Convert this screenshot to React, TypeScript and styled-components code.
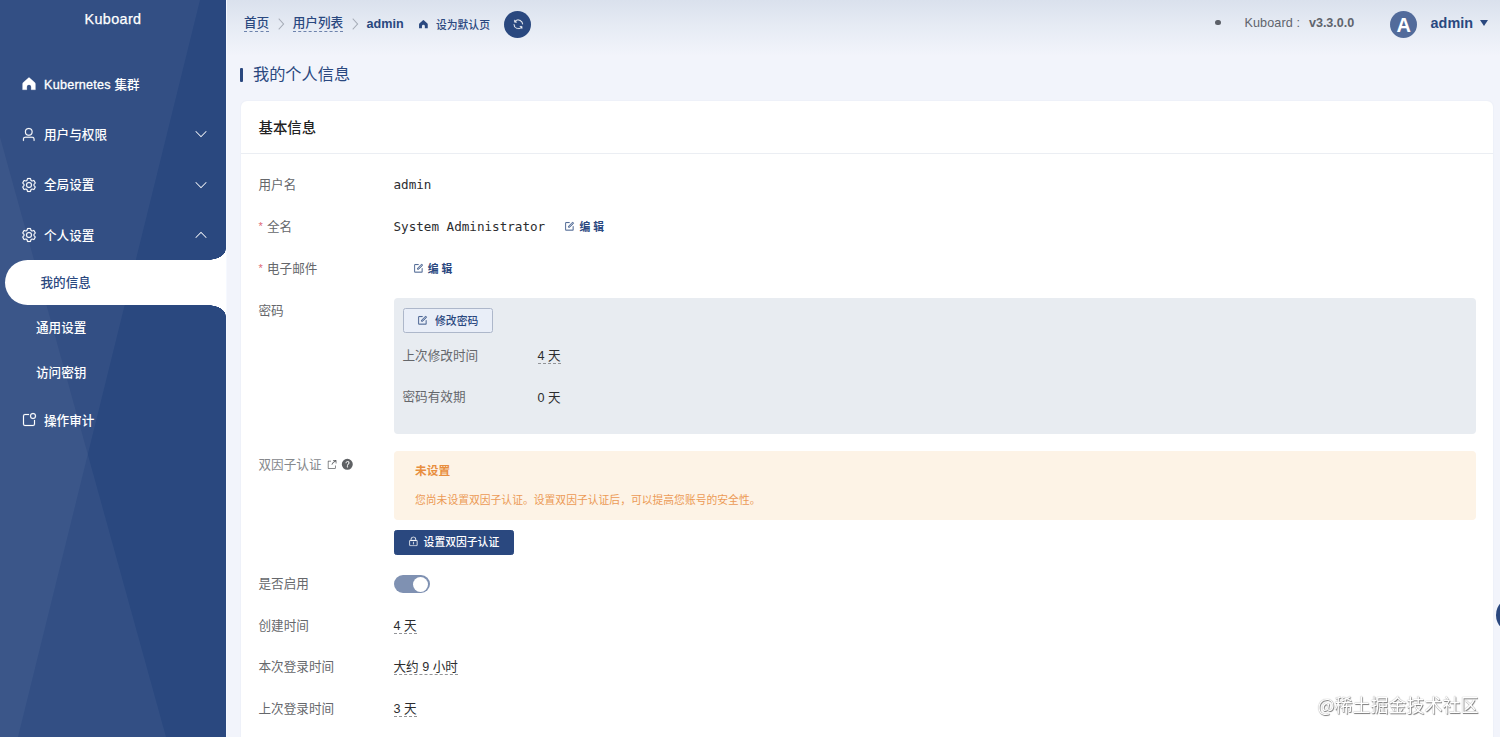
import React from "react";
import styled, { createGlobalStyle, css } from "styled-components";

const navy = "#2a487f";

const GlobalStyle = createGlobalStyle`
  * { box-sizing: border-box; }
  html, body, #root { height: 100%; }
  body {
    margin: 0;
    overflow: hidden;
    background: #f2f4fb;
    color: #303133;
    font-family: "Liberation Sans", "Noto Sans CJK SC", sans-serif;
    font-size: 12.6px;
  }
`;

const paths = {
  home: ["M512 100 C540 100 560 125 580 145 L870 400 Q925 450 925 515 V885 H650 V690 A138 138 0 0 0 374 690 V885 H99 V515 Q99 450 154 400 L444 145 C464 125 484 100 512 100z"],
  user: ["M512 512a192 192 0 1 0 0-384 192 192 0 0 0 0 384zm0 64a256 256 0 1 1 0-512 256 256 0 0 1 0 512zm320 320v-96a96 96 0 0 0-96-96H288a96 96 0 0 0-96 96v96a32 32 0 1 1-64 0v-96a160 160 0 0 1 160-160h448a160 160 0 0 1 160 160v96a32 32 0 1 1-64 0z"],
  setting: ["M600.704 64a32 32 0 0 1 30.464 22.208l35.2 109.376c14.784 7.232 28.928 15.36 42.432 24.512l112.384-24.192a32 32 0 0 1 34.432 15.36L944.32 364.8a32 32 0 0 1-4.032 37.504l-77.12 85.12a357.12 357.12 0 0 1 0 49.024l77.12 85.248a32 32 0 0 1 4.032 37.504l-88.704 153.6a32 32 0 0 1-34.432 15.296L708.8 803.904c-13.44 9.088-27.648 17.28-42.368 24.512l-35.264 109.376A32 32 0 0 1 600.704 960H423.296a32 32 0 0 1-30.464-22.208L357.696 828.48a351.616 351.616 0 0 1-42.56-24.64l-112.32 24.256a32 32 0 0 1-34.432-15.36L79.68 659.2a32 32 0 0 1 4.032-37.504l77.12-85.248a357.12 357.12 0 0 1 0-48.896l-77.12-85.248A32 32 0 0 1 79.68 364.8l88.704-153.6a32 32 0 0 1 34.432-15.296l112.32 24.256c13.568-9.152 27.776-17.408 42.56-24.64l35.2-109.312A32 32 0 0 1 423.232 64H600.64zm-23.424 64H446.72l-36.352 113.088-24.512 11.968a294.113 294.113 0 0 0-34.816 20.096l-22.656 15.36-116.224-25.088-65.28 113.152 79.68 88.192-1.92 27.136a293.12 293.12 0 0 0 0 40.192l1.92 27.136-79.808 88.192 65.344 113.152 116.224-25.024 22.656 15.296a294.113 294.113 0 0 0 34.816 20.096l24.512 11.968L446.72 896h130.688l36.48-113.152 24.448-11.904a288.282 288.282 0 0 0 34.752-20.096l22.592-15.296 116.288 25.024 65.28-113.152-79.744-88.192 1.92-27.136a293.12 293.12 0 0 0 0-40.256l-1.92-27.136 79.808-88.128-65.344-113.152-116.288 24.96-22.592-15.232a287.616 287.616 0 0 0-34.752-20.096l-24.448-11.904L577.344 128zM512 320a192 192 0 1 1 0 384 192 192 0 0 1 0-384zm0 64a128 128 0 1 0 0 256 128 128 0 0 0 0-256z"],
  audit: [
    "M512 128v64H256a64 64 0 0 0-64 64v512a64 64 0 0 0 64 64h512a64 64 0 0 0 64-64V512h64v256a128 128 0 0 1-128 128H256a128 128 0 0 1-128-128V256a128 128 0 0 1 128-128h256z",
    "M768 384a128 128 0 1 0 0-256 128 128 0 0 0 0 256zm0 64a192 192 0 1 1 0-384 192 192 0 0 1 0 384z",
  ],
  edit: [
    "M832 512a32 32 0 1 1 64 0v352a32 32 0 0 1-32 32H160a32 32 0 0 1-32-32V160a32 32 0 0 1 32-32h352a32 32 0 0 1 0 64H192v640h640V512z",
    "m469.952 554.24 52.8-7.552L847.104 222.4a32 32 0 1 0-45.248-45.248L477.44 501.44l-7.552 52.8zm422.4-422.4a96 96 0 0 1 0 135.808l-331.84 331.84a32 32 0 0 1-18.112 9.088L436.8 623.68a32 32 0 0 1-36.224-36.224l15.104-105.6a32 32 0 0 1 9.024-18.112l331.904-331.84a96 96 0 0 1 135.744 0z",
  ],
  lock: [
    "M224 448a32 32 0 0 0-32 32v384a32 32 0 0 0 32 32h576a32 32 0 0 0 32-32V480a32 32 0 0 0-32-32H224zm0-64h576a96 96 0 0 1 96 96v384a96 96 0 0 1-96 96H224a96 96 0 0 1-96-96V480a96 96 0 0 1 96-96z",
    "M512 544a32 32 0 0 1 32 32v192a32 32 0 1 1-64 0V576a32 32 0 0 1 32-32zm192-160v-64a192 192 0 1 0-384 0v64h384zM512 64a256 256 0 0 1 256 256v128H256V320A256 256 0 0 1 512 64z",
  ],
  refresh: ["M771.776 794.88A384 384 0 0 1 128 512h64a320 320 0 0 0 555.712 216.448H654.72a32 32 0 1 1 0-64h149.056a32 32 0 0 1 32 32v148.928a32 32 0 1 1-64 0v-50.56zM276.288 295.616h92.992a32 32 0 0 1 0 64H220.16a32 32 0 0 1-32-32V178.56a32 32 0 0 1 64 0v50.56A384 384 0 0 1 896.128 512h-64a320 320 0 0 0-555.776-216.384z"],
  question: ["M512 64a448 448 0 1 1 0 896 448 448 0 0 1 0-896zm23.744 191.488c-52.096 0-92.928 14.784-123.2 44.352-30.976 29.568-45.76 70.4-45.76 122.496h80.256c0-29.568 5.632-52.8 17.6-68.992 13.376-19.712 35.2-28.864 66.176-28.864 23.936 0 42.944 6.336 56.32 19.712 12.672 13.376 19.712 31.68 19.712 54.912 0 17.6-6.336 34.496-19.008 49.984l-8.448 9.856c-45.76 40.832-73.216 70.4-82.368 89.408-9.856 19.008-14.08 42.24-14.08 68.992v9.856h80.96v-9.856c0-16.896 3.52-31.68 10.56-45.76 6.336-12.672 15.488-24.64 28.16-35.2 33.792-29.568 54.208-48.576 60.544-55.616 16.896-22.528 26.048-51.392 26.048-86.592 0-42.944-14.08-76.736-42.24-101.376-28.16-25.344-65.472-37.312-111.232-37.312zm-12.672 406.208a54.272 54.272 0 0 0-38.72 14.784 49.408 49.408 0 0 0-15.488 38.016c0 15.488 4.928 28.16 15.488 38.016A54.848 54.848 0 0 0 523.072 768c15.488 0 28.16-4.928 38.72-14.784a51.52 51.52 0 0 0 16.192-38.72 51.968 51.968 0 0 0-15.488-38.016 55.936 55.936 0 0 0-39.424-14.784z"],
  external: ["M448 160v64H224v576h576V576h64v256a32 32 0 0 1-32 32H192a32 32 0 0 1-32-32V192a32 32 0 0 1 32-32z M620 96H900a30 30 0 0 1 30 30V400H862V214Q640 300 545 520L482 492Q580 260 800 164H620z"],
  down: ["M100 330 L145 285 L512 652 L879 285 L924 330 L512 742z"],
  up: ["M100 694 L145 739 L512 372 L879 739 L924 694 L512 282z"],
  right: ["M300 90 L350 40 L780 512 L350 984 L300 934 L685 512z"],
};

type IconName = keyof typeof paths;

const Svg = styled.svg<{ $size: number; $bold?: boolean }>`
  display: block;
  flex: none;
  width: ${(p) => p.$size}px;
  height: ${(p) => p.$size}px;
  fill: currentColor;
  stroke: currentColor;
  stroke-width: ${(p) => (p.$bold ? 12 : 0)};
`;

const Icon = ({ name, size, bold }: { name: IconName; size: number; bold?: boolean }) => (
  <Svg $size={size} $bold={bold} viewBox="0 0 1024 1024" aria-hidden="true">
    {paths[name].map((d) => (
      <path key={d} d={d} />
    ))}
  </Svg>
);

const Shell = styled.div`
  display: flex;
  height: 737px;
  overflow: hidden;
`;

/* ---------- sidebar ---------- */

const Sidebar = styled.aside`
  position: relative;
  flex: none;
  width: 226px;
  background: ${navy};
  color: #fff;
  isolation: isolate;

  &::before,
  &::after {
    content: "";
    position: absolute;
    inset: 0;
    z-index: -1;
    background: rgba(255, 255, 255, 0.045);
  }
  &::before {
    clip-path: polygon(0 0, 200px 0, 18px 737px, 0 737px);
  }
  &::after {
    clip-path: polygon(0 137px, 166px 737px, 0 737px);
  }
`;

const Brand = styled.div`
  height: 59px;
  padding-top: 10px;
  text-align: center;
  font-size: 14.4px;
  line-height: 19px;
  letter-spacing: 0.35px;
  -webkit-text-stroke: 0.25px;
`;

const MenuItem = styled.div`
  display: flex;
  align-items: center;
  height: 50.3px;
  padding: 0 18px 0 21px;
  font-weight: 500;
`;

const MenuIcon = styled.span`
  display: flex;
  justify-content: center;
  width: 15px;
  margin-right: 8px;
`;

const MenuText = styled.span`
  flex: 1;
  padding-bottom: 2px;
`;

const Latin = styled.span`
  letter-spacing: 0.25px;
  -webkit-text-stroke: 0.3px;
`;

const SubItem = styled.div<{ $active?: boolean }>`
  position: relative;
  display: flex;
  align-items: center;
  height: 45px;
  padding: 0 0 2px 36px;
  font-weight: 500;

  ${(p) =>
    p.$active &&
    css`
      margin-left: 4.5px;
      border-radius: 22.5px 0 0 22.5px;
      background: #fff;
      color: ${navy};

      &::before,
      &::after {
        content: "";
        position: absolute;
        right: 0;
        width: 18px;
        height: 11px;
      }
      &::before {
        bottom: 100%;
        background: radial-gradient(ellipse 18px 11px at 0 0, transparent 97%, #fff 100%);
      }
      &::after {
        top: 100%;
        background: radial-gradient(ellipse 18px 11px at 0 100%, transparent 97%, #fff 100%);
      }
    `}
`;

/* ---------- header ---------- */

const Main = styled.main`
  flex: 1;
  min-width: 0;
  background: linear-gradient(#dae1ed 0, #e6ebf4 26px, #f2f4fb 56px);
  background-color: #f2f4fb;
  box-shadow: inset 1px 0 0 #f6f9ff;
`;

const Header = styled.header`
  display: flex;
  align-items: center;
  height: 48px;
  padding: 0 12px 0 18px;
  color: ${navy};
`;

const Crumb = styled.a`
  height: 17px;
  margin-bottom: 1px;
  border-bottom: 1px dashed #6d82ac;
  line-height: 17px;
  font-weight: 500;
`;

const CrumbArrow = styled.span`
  display: flex;
  justify-content: center;
  width: 23.5px;
  margin-bottom: 1px;
  color: #a0a6b2;
`;

const Current = styled.span`
  font-weight: 700;
`;

const SetDefault = styled.span`
  display: flex;
  align-items: center;
  gap: 7.5px;
  margin-left: 14px;
  font-size: 10.8px;
  font-weight: 500;
`;

const SetDefaultText = styled.span`
  padding-bottom: 1px;
`;

const RefreshButton = styled.button`
  display: flex;
  align-items: center;
  justify-content: center;
  width: 27px;
  height: 27px;
  margin-left: 14.5px;
  padding: 0;
  border: 0;
  border-radius: 50%;
  background: ${navy};
  color: #fff;
`;

const HeaderRight = styled.div`
  display: flex;
  align-items: center;
  margin-left: auto;
`;

const Dot = styled.span`
  width: 5.5px;
  height: 5.5px;
  margin: 0 23.5px 3px 0;
  border-radius: 50%;
  background: #5c6068;
`;

const Version = styled.span`
  display: flex;
  gap: 9px;
  margin: 0 36px 3px 0;
  color: #5f646d;
  letter-spacing: 0.1px;

  b {
    letter-spacing: -0.05px;
  }
`;

const Avatar = styled.span`
  width: 27px;
  height: 27px;
  margin-right: 13.5px;
  border-radius: 50%;
  background: #526b9b;
  color: #fff;
  font-size: 20px;
  font-weight: 700;
  line-height: 28px;
  text-align: center;
`;

const UserName = styled.span`
  margin-bottom: 3px;
  font-size: 14.4px;
  font-weight: 700;
`;

const Caret = styled.span`
  margin: 0 0 2px 7px;
  border: 4.7px solid transparent;
  border-top: 6px solid ${navy};
  border-bottom: 0;
`;

/* ---------- content ---------- */

const PageTitle = styled.h1`
  display: flex;
  align-items: center;
  gap: 10px;
  height: 53px;
  margin: 0;
  padding-left: 13.5px;
  color: ${navy};
  font-size: 16.2px;
  font-weight: 400;

  &::before {
    content: "";
    width: 3.5px;
    height: 14px;
    border-radius: 1px;
    background: ${navy};
  }
`;

const PageTitleText = styled.span`
  padding-bottom: 3px;
`;

const Card = styled.section`
  height: 660px;
  margin: 0 7px 0 14.5px;
  border-radius: 6px;
  background: #fff;
  box-shadow: 0 0 2px rgba(42, 72, 127, 0.07);
`;

const CardHead = styled.h2`
  height: 53px;
  margin: 0;
  padding-left: 18px;
  border-bottom: 1px solid #ebeef3;
  color: #222;
  font-size: 14.4px;
  font-weight: 500;
  line-height: 54px;
`;

const Form = styled.div`
  padding: 10px 17px 0 18px;
`;

const Row = styled.div<{ $h: number }>`
  display: flex;
  height: ${(p) => p.$h}px;
`;

const Label = styled.div<{ $muted?: boolean }>`
  display: flex;
  align-items: center;
  flex: none;
  width: 135px;
  height: 41px;
  padding-bottom: 2px;
  color: ${(p) => (p.$muted ? "#85878b" : "#65676b")};
`;

const Required = styled.span`
  width: 8.5px;
  color: #e06a76;
  font-size: 11px;
`;

const LabelIcons = styled.span`
  display: flex;
  align-items: center;
  gap: 3px;
  margin: 2px 0 0 5px;
  color: #5f6164;
`;

const Value = styled.div<{ $mono?: boolean }>`
  display: flex;
  align-items: center;
  height: 41px;
  color: #2c2d2f;
  ${(p) => p.$mono && css`font-family: "DejaVu Sans Mono", monospace;`}
`;

const Underlined = styled.span`
  height: 17px;
  border-bottom: 1px dashed #929498;
  line-height: 18px;
`;

const EditLink = styled.a`
  display: flex;
  align-items: center;
  gap: 4.5px;
  margin-left: 19px;
  color: ${navy};
  font-family: "Liberation Sans", "Noto Sans CJK SC", sans-serif;
  font-size: 10.8px;
  font-weight: 700;
`;

const EditText = styled.span`
  padding-bottom: 1px;
`;

const Stack = styled.div`
  flex: 1;
  min-width: 0;
`;

const PasswordPanel = styled.div`
  height: 136px;
  margin-top: 8px;
  padding: 9.5px 9px;
  border-radius: 4px;
  background: #e8ecf1;
`;

const PasswordFacts = styled.div`
  margin-top: 1.5px;
`;

const Button = styled.button<{ $primary?: boolean }>`
  display: flex;
  align-items: center;
  justify-content: center;
  gap: ${(p) => (p.$primary ? 5 : 7)}px;
  width: ${(p) => (p.$primary ? 120 : 90.5)}px;
  height: 25.5px;
  padding: 0 0 ${(p) => (p.$primary ? 2 : 0)}px;
  border: 1px solid ${(p) => (p.$primary ? navy : "#adb7ca")};
  border-radius: 2.5px;
  background: ${(p) => (p.$primary ? navy : "#e9eef8")};
  color: ${(p) => (p.$primary ? "#fff" : navy)};
  font-family: inherit;
  font-size: 10.8px;
  font-weight: 500;
`;

const Alert = styled.div`
  height: 69.5px;
  margin: 6.5px 0 9.5px;
  padding: 10px 21.5px;
  border-radius: 4px;
  background: #fdf3e6;
  color: #ec9a55;
`;

const AlertTitle = styled.div`
  color: #e88e3e;
  font-size: 11.7px;
  font-weight: 700;
  line-height: 20px;
`;

const AlertText = styled.div`
  margin-top: 10px;
  font-size: 10.8px;
  line-height: 19px;
`;

const Switch = styled.span`
  display: flex;
  justify-content: flex-end;
  width: 36px;
  height: 18px;
  margin-top: 1px;
  padding: 1.5px;
  border-radius: 9px;
  background: #7f91b2;

  &::after {
    content: "";
    width: 15px;
    height: 15px;
    border-radius: 50%;
    background: #fff;
  }
`;

const SideHandle = styled.span`
  position: fixed;
  top: 597px;
  left: 1495.5px;
  width: 36px;
  height: 36px;
  border-radius: 50%;
  background: ${navy};
`;

const Watermark = styled.span`
  position: fixed;
  right: 21.5px;
  bottom: 19px;
  color: #fff;
  font-family: "Noto Sans CJK SC", sans-serif;
  font-size: 18px;
  line-height: 27px;
  text-shadow: 0 0 1px #888, 0.8px 0.8px 0.8px #7a7a7a;
`;

const Edit = () => (
  <EditLink>
    <Icon name="edit" size={10.8} bold />
    <EditText>编 辑</EditText>
  </EditLink>
);

const menu: { icon: IconName; text: React.ReactNode; arrow?: IconName; size: number }[] = [
  { icon: "home", text: <><Latin>Kubernetes</Latin> 集群</>, size: 16 },
  { icon: "user", text: "用户与权限", arrow: "down", size: 15.5 },
  { icon: "setting", text: "全局设置", arrow: "down", size: 16 },
  { icon: "setting", text: "个人设置", arrow: "up", size: 16 },
];

export default function App() {
  return (
    <Shell>
      <GlobalStyle />
      <Sidebar>
        <Brand>Kuboard</Brand>
        {menu.map((m, i) => (
          <MenuItem key={i}>
            <MenuIcon><Icon name={m.icon} size={m.size} bold /></MenuIcon>
            <MenuText>{m.text}</MenuText>
            {m.arrow && <Icon name={m.arrow} size={14} />}
          </MenuItem>
        ))}
        <SubItem $active>我的信息</SubItem>
        <SubItem>通用设置</SubItem>
        <SubItem>访问密钥</SubItem>
        <MenuItem>
          <MenuIcon><Icon name="audit" size={16} bold /></MenuIcon>
          <MenuText>操作审计</MenuText>
        </MenuItem>
      </Sidebar>
      <Main>
        <Header>
          <Crumb>首页</Crumb>
          <CrumbArrow><Icon name="right" size={12} bold /></CrumbArrow>
          <Crumb>用户列表</Crumb>
          <CrumbArrow><Icon name="right" size={12} bold /></CrumbArrow>
          <Current>admin</Current>
          <SetDefault>
            <Icon name="home" size={10.8} />
            <SetDefaultText>设为默认页</SetDefaultText>
          </SetDefault>
          <RefreshButton aria-label="refresh"><Icon name="refresh" size={12.6} bold /></RefreshButton>
          <HeaderRight>
            <Dot />
            <Version>Kuboard : <b>v3.3.0.0</b></Version>
            <Avatar>A</Avatar>
            <UserName>admin</UserName>
            <Caret />
          </HeaderRight>
        </Header>
        <PageTitle><PageTitleText>我的个人信息</PageTitleText></PageTitle>
        <Card>
          <CardHead>基本信息</CardHead>
          <Form>
            <Row $h={42}>
              <Label>用户名</Label>
              <Value $mono>admin</Value>
            </Row>
            <Row $h={42}>
              <Label><Required>*</Required>全名</Label>
              <Value $mono>System Administrator<Edit /></Value>
            </Row>
            <Row $h={42}>
              <Label><Required>*</Required>电子邮件</Label>
              <Value><Edit /></Value>
            </Row>
            <Row $h={154}>
              <Label>密码</Label>
              <Stack>
                <PasswordPanel>
                  <Button><Icon name="edit" size={10.8} bold />修改密码</Button>
                  <PasswordFacts>
                    <Row $h={41}>
                      <Label>上次修改时间</Label>
                      <Value><Underlined>4 天</Underlined></Value>
                    </Row>
                    <Row $h={41}>
                      <Label>密码有效期</Label>
                      <Value>0 天</Value>
                    </Row>
                  </PasswordFacts>
                </PasswordPanel>
              </Stack>
            </Row>
            <Row $h={119}>
              <Label $muted>
                双因子认证
                <LabelIcons>
                  <Icon name="external" size={11.5} />
                  <Icon name="question" size={12.6} />
                </LabelIcons>
              </Label>
              <Stack>
                <Alert>
                  <AlertTitle>未设置</AlertTitle>
                  <AlertText>您尚未设置双因子认证。设置双因子认证后，可以提高您账号的安全性。</AlertText>
                </Alert>
                <Button $primary><Icon name="lock" size={10.8} bold />设置双因子认证</Button>
              </Stack>
            </Row>
            <Row $h={41.5}>
              <Label>是否启用</Label>
              <Value><Switch /></Value>
            </Row>
            <Row $h={41.5}>
              <Label>创建时间</Label>
              <Value><Underlined>4 天</Underlined></Value>
            </Row>
            <Row $h={41.5}>
              <Label>本次登录时间</Label>
              <Value><Underlined>大约 9 小时</Underlined></Value>
            </Row>
            <Row $h={41.5}>
              <Label>上次登录时间</Label>
              <Value><Underlined>3 天</Underlined></Value>
            </Row>
          </Form>
        </Card>
      </Main>
      <SideHandle />
      <Watermark>@稀土掘金技术社区</Watermark>
    </Shell>
  );
}
